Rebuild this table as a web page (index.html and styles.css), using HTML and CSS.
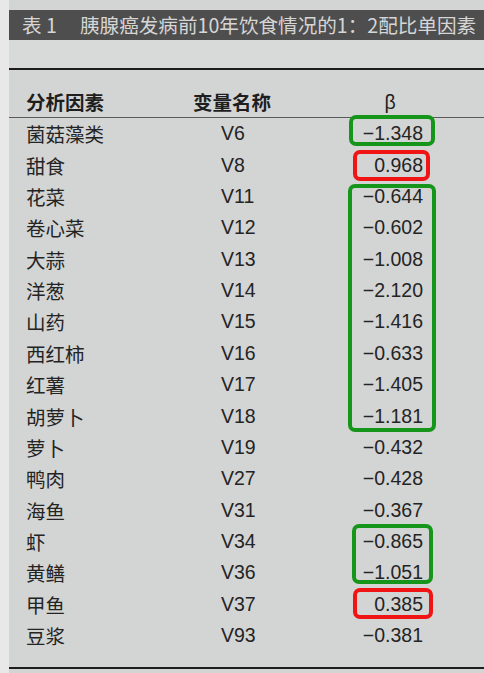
FILE: index.html
```html
<!DOCTYPE html>
<html lang="zh">
<head>
<meta charset="utf-8">
<link rel="stylesheet" href="styles.css">
</head>
<body>
<div class="page">
  <div class="sheet">
    <div class="title"><span class="tno">表 1</span>胰腺癌发病前10年饮食情况的1：2配比单因素</div>
    <div class="gap"></div>
    <div class="table">
      <div class="row head">
        <div class="c1">分析因素</div>
        <div class="c2">变量名称</div>
        <div class="c3">β</div>
      </div>
      <div class="body">
        <div class="row"><div class="c1">菌菇藻类</div><div class="c2">V6</div><div class="c3">−1.348</div></div>
        <div class="row"><div class="c1">甜食</div><div class="c2">V8</div><div class="c3">0.968</div></div>
        <div class="row"><div class="c1">花菜</div><div class="c2">V11</div><div class="c3">−0.644</div></div>
        <div class="row"><div class="c1">卷心菜</div><div class="c2">V12</div><div class="c3">−0.602</div></div>
        <div class="row"><div class="c1">大蒜</div><div class="c2">V13</div><div class="c3">−1.008</div></div>
        <div class="row"><div class="c1">洋葱</div><div class="c2">V14</div><div class="c3">−2.120</div></div>
        <div class="row"><div class="c1">山药</div><div class="c2">V15</div><div class="c3">−1.416</div></div>
        <div class="row"><div class="c1">西红柿</div><div class="c2">V16</div><div class="c3">−0.633</div></div>
        <div class="row"><div class="c1">红薯</div><div class="c2">V17</div><div class="c3">−1.405</div></div>
        <div class="row"><div class="c1">胡萝卜</div><div class="c2">V18</div><div class="c3">−1.181</div></div>
        <div class="row"><div class="c1">萝卜</div><div class="c2">V19</div><div class="c3">−0.432</div></div>
        <div class="row"><div class="c1">鸭肉</div><div class="c2">V27</div><div class="c3">−0.428</div></div>
        <div class="row"><div class="c1">海鱼</div><div class="c2">V31</div><div class="c3">−0.367</div></div>
        <div class="row"><div class="c1">虾</div><div class="c2">V34</div><div class="c3">−0.865</div></div>
        <div class="row"><div class="c1">黄鳝</div><div class="c2">V36</div><div class="c3">−1.051</div></div>
        <div class="row"><div class="c1">甲鱼</div><div class="c2">V37</div><div class="c3">0.385</div></div>
        <div class="row"><div class="c1">豆浆</div><div class="c2">V93</div><div class="c3">−0.381</div></div>
      </div>
      <div class="foot"></div>
    </div>
  </div>
  <div class="mark green m1"></div>
  <div class="mark red m2"></div>
  <div class="mark green m3"></div>
  <div class="mark green m4"></div>
  <div class="mark red m5"></div>
</div>
</body>
</html>
```

FILE: styles.css
```css
html, body {
  margin: 0;
  padding: 0;
}
body {
  width: 484px;
  height: 673px;
  overflow: hidden;
  background: #e8e8e8;
  font-family: "Noto Sans CJK SC", "Liberation Sans", sans-serif;
  color: #242424;
}
.page {
  position: relative;
  width: 484px;
  height: 673px;
  padding-left: 9px;
  box-sizing: border-box;
}
.sheet {
  height: 673px;
  background: #d3d4d4;
  padding-top: 10px;
  box-sizing: border-box;
}
.title {
  height: 30px;
  line-height: 30px;
  background: #4e4e4e;
  color: #d6d6d6;
  font-size: 19.6px;
  padding-left: 13px;
  white-space: nowrap;
  overflow: hidden;
  letter-spacing: 0;
}
.tno {
  display: inline-block;
  width: 58px;
}
.gap {
  height: 28px;
  background: #d8d9d9;
}
.table {
  border-top: 2px solid #1c1c1c;
}
.row {
  display: grid;
  grid-template-columns: 184px 152px 90px 1fr;
  height: 31.375px;
  align-items: center;
  font-size: 19.5px;
}
.row.head {
  height: 46px;
  align-items: end;
  padding-bottom: 1px;
  border-bottom: 1px solid #5a5a5a;
  font-weight: 700;
  font-size: 19.5px;
  color: #1e1e1e;
}
.head .c1, .head .c2, .head .c3 {
  line-height: 28px;
}
.c1 {
  padding-left: 17px;
  line-height: 31px;
}
.c2 {
  font-family: "Liberation Sans", sans-serif;
  padding-left: 28px;
  font-size: 19.5px;
}
.head .c2 {
  font-family: "Noto Sans CJK SC", sans-serif;
  padding-left: 0;
  font-size: 19.5px;
}
.c3 {
  font-family: "Liberation Sans", sans-serif;
  text-align: right;
  padding-right: 12px;
  font-size: 19.5px;
}
.head .c3 {
  text-align: center;
  font-weight: 400;
  padding-right: 0;
  padding-left: 0;
}
.foot {
  margin-top: 16px;
  border-top: 2px solid #1e1e1e;
}
.mark {
  position: absolute;
  border: 4px solid;
  border-radius: 7px;
  box-sizing: border-box;
}
.green { border-color: #15961a; }
.red { border-color: #f01414; }
.m1 { left: 349px; top: 115px; width: 86px; height: 31px; }
.m2 { left: 353px; top: 150px; width: 77px; height: 31px; }
.m3 { left: 348px; top: 184px; width: 88px; height: 248px; }
.m4 { left: 352px; top: 524px; width: 81px; height: 60px; }
.m5 { left: 353px; top: 588px; width: 80px; height: 31px; }
```
